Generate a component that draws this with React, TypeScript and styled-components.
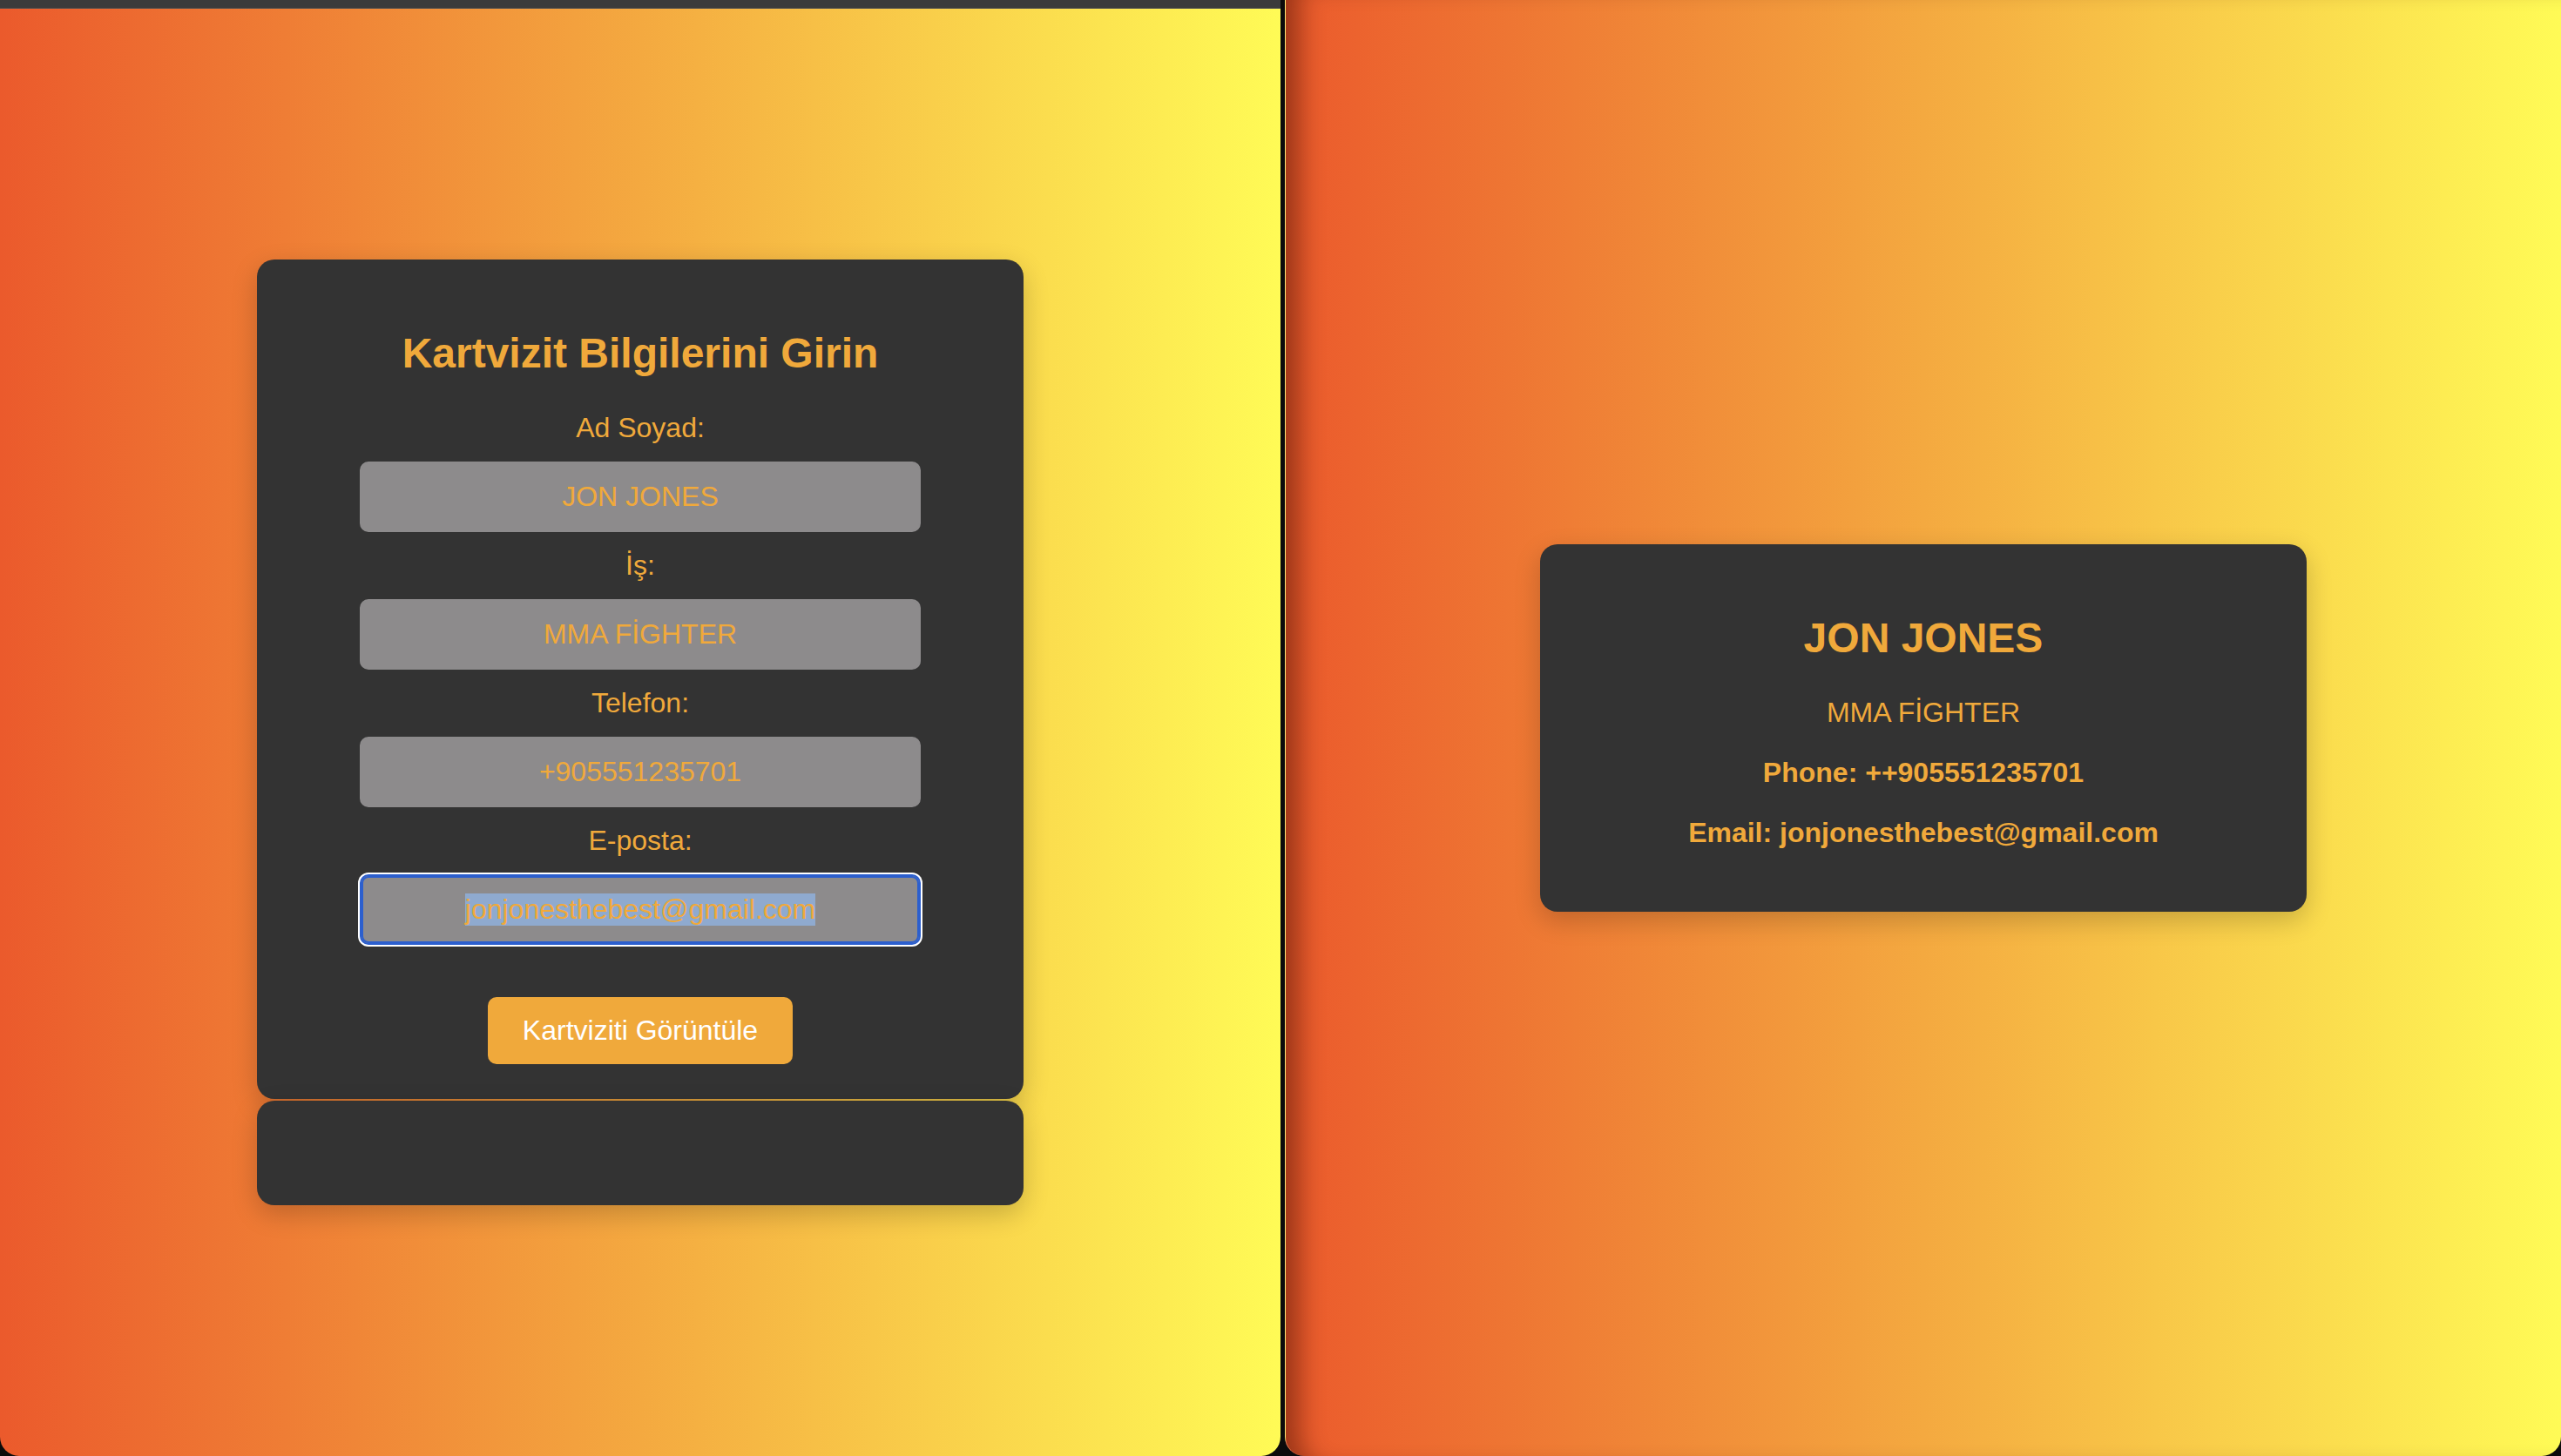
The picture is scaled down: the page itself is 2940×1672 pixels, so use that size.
import React, { useEffect, useRef } from "react";
import styled, { createGlobalStyle, css } from "styled-components";

const GlobalStyle = createGlobalStyle`
  html, body {
    margin: 0;
    padding: 0;
    background: #0b0b0b;
    width: 2940px;
    height: 1672px;
    overflow: hidden;
    font-family: "Liberation Sans", Arial, Helvetica, sans-serif;
  }
  * { box-sizing: border-box; }
`;

const ORANGE = "#F0A93B";
const GRADIENT = "linear-gradient(to right, #EB5A2C 0%, #F4A940 50%, #FFFB56 100%)";

const Desktop = styled.div`
  display: flex;
  flex-direction: row;
  gap: 5px;
  width: 2940px;
  height: 1672px;
`;

const LeftWindow = styled.div`
  width: 1470px;
  height: 100%;
  display: flex;
  flex-direction: column;
  border-radius: 0 0 22px 22px;
  overflow: hidden;
`;

const TitleBar = styled.div`
  height: 10px;
  background: #3b3b3b;
  border-bottom: 1px solid #4c4c4c;
  flex: none;
`;

const Viewport = styled.div`
  flex: 1;
  background: ${GRADIENT};
  display: flex;
  align-items: center;
  justify-content: center;
`;

const RightWindow = styled.div`
  flex: 1;
  height: 100%;
  background: ${GRADIENT};
  border-radius: 0 0 22px 22px;
  border-left: 1px solid rgba(255, 200, 170, 0.35);
  box-shadow: inset 34px 0 28px -18px rgba(60, 10, 0, 0.45);
  display: flex;
  align-items: center;
  justify-content: center;
`;

const Stack = styled.div`
  width: 880px;
  display: flex;
  flex-direction: column;
  gap: 2px;
`;

const Card = styled.div<{ $empty?: boolean }>`
  width: 880px;
  background: #333333;
  border-radius: 20px;
  box-shadow: 0 10px 30px rgba(0, 0, 0, 0.2);
  padding: 40px;
  display: flex;
  flex-direction: column;
  align-items: center;
  text-align: center;
  ${(p) =>
    p.$empty &&
    css`
      height: 120px;
    `}
`;

const Title = styled.h2`
  margin: 40px 0;
  font-size: 48px;
  line-height: 55px;
  font-weight: 700;
  color: ${ORANGE};
`;

const Label = styled.label`
  display: block;
  font-size: 32px;
  line-height: 37px;
  color: ${ORANGE};
  margin-bottom: 20px;
`;

const Field = styled.input<{ $focused?: boolean }>`
  display: block;
  width: 644px;
  height: 81px;
  margin: 0 0 20px;
  padding: 20px;
  border: 2px solid #8d8b8c;
  border-radius: 10px;
  background: #8d8b8c;
  color: ${ORANGE};
  font-family: "Liberation Sans", Arial, Helvetica, sans-serif;
  font-size: 32px;
  line-height: 37px;
  text-align: center;
  outline: none;
  &::selection {
    background: #8faacf;
    color: ${ORANGE};
  }
  ${(p) =>
    p.$focused &&
    css`
      border-color: #2c5fce;
      box-shadow: 0 0 0 2px #ffffff, inset 0 0 0 2px #2c5fce;
    `}
`;

const ViewButton = styled.button`
  margin-top: 40px;
  height: 77px;
  padding: 20px 40px;
  border: none;
  border-radius: 10px;
  background: ${ORANGE};
  color: #ffffff;
  font-family: "Liberation Sans", Arial, Helvetica, sans-serif;
  font-size: 32px;
  line-height: 37px;
  white-space: nowrap;
  cursor: pointer;
`;

const Name = styled.h2`
  margin: 40px 0;
  font-size: 48px;
  line-height: 55px;
  font-weight: 700;
  color: ${ORANGE};
`;

const Line = styled.p<{ $bold?: boolean }>`
  margin: 0 0 32px;
  font-size: 32px;
  line-height: 37px;
  color: ${ORANGE};
  font-weight: ${(p) => (p.$bold ? 700 : 400)};
`;

const fields = [
  { id: "name", label: "Ad Soyad:", value: "JON JONES" },
  { id: "job", label: "İş:", value: "MMA FİGHTER" },
  { id: "phone", label: "Telefon:", value: "+905551235701" },
  { id: "email", label: "E-posta:", value: "jonjonesthebest@gmail.com" },
];

export default function App() {
  const emailRef = useRef<HTMLInputElement>(null);

  useEffect(() => {
    const el = emailRef.current;
    if (el) {
      el.focus();
      el.select();
    }
  }, []);

  return (
    <>
      <GlobalStyle />
      <Desktop>
        <LeftWindow>
          <TitleBar />
          <Viewport>
            <Stack>
              <Card as="form" onSubmit={(e: React.FormEvent) => e.preventDefault()}>
                <Title>Kartvizit Bilgilerini Girin</Title>
                {fields.map((f) => (
                  <React.Fragment key={f.id}>
                    <Label htmlFor={f.id}>{f.label}</Label>
                    <Field
                      id={f.id}
                      defaultValue={f.value}
                      ref={f.id === "email" ? emailRef : undefined}
                      $focused={f.id === "email"}
                    />
                  </React.Fragment>
                ))}
                <ViewButton type="submit">Kartviziti Görüntüle</ViewButton>
              </Card>
              <Card $empty />
            </Stack>
          </Viewport>
        </LeftWindow>
        <RightWindow>
          <Card>
            <Name>JON JONES</Name>
            <Line>MMA FİGHTER</Line>
            <Line $bold>Phone: ++905551235701</Line>
            <Line $bold>Email: jonjonesthebest@gmail.com</Line>
          </Card>
        </RightWindow>
      </Desktop>
    </>
  );
}
